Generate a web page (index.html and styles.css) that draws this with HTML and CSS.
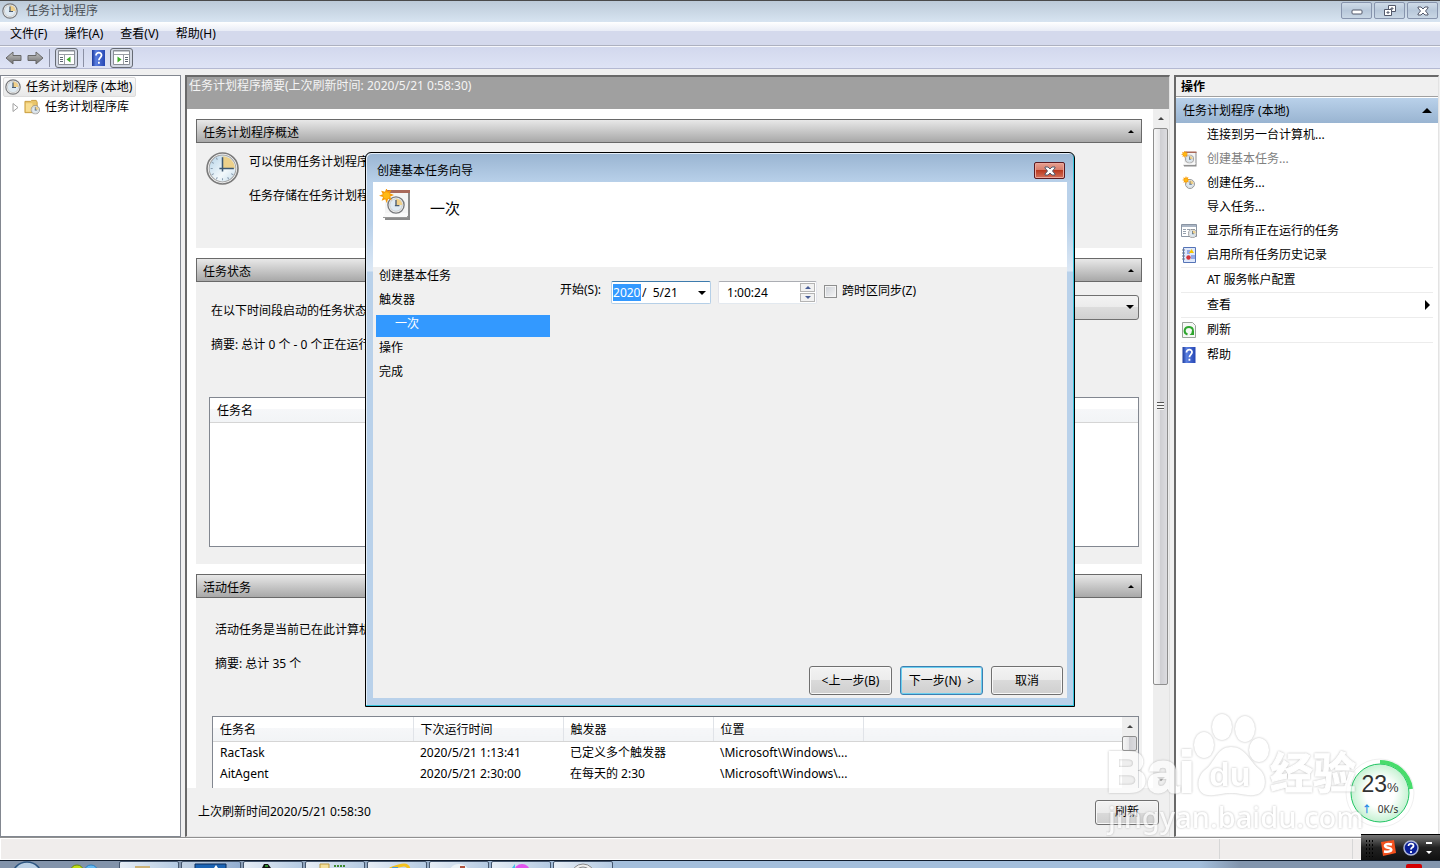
FILE: index.html
```html
<!DOCTYPE html>
<html lang="zh-CN">
<head>
    <meta charset="UTF-8">
    <meta name="viewport" content="width=device-width, initial-scale=1.0">
    <title>任务计划程序</title>
    <link rel="stylesheet" href="styles.css">
</head>
<body>
    <svg class="defs" aria-hidden="true">
        <defs>
            <linearGradient id="face" x1="0" y1="0" x2="1" y2="1">
                <stop offset="0" stop-color="#b4d3e8"/>
                <stop offset="0.6" stop-color="#f2f8fb"/>
                <stop offset="1" stop-color="#c4dcec"/>
            </linearGradient>
            <linearGradient id="metal" x1="0" y1="0" x2="0" y2="1">
                <stop offset="0" stop-color="#c4c4c4"/>
                <stop offset="1" stop-color="#6e6e6e"/>
            </linearGradient>
            <linearGradient id="helpblue" x1="0" y1="0" x2="1" y2="0">
                <stop offset="0" stop-color="#1d3a9c"/>
                <stop offset="0.3" stop-color="#5a7fe0"/>
                <stop offset="1" stop-color="#2546b4"/>
            </linearGradient>
            <symbol id="clock" viewBox="0 0 32 32">
                <circle cx="16" cy="16" r="15" fill="#fdfdfd" stroke="#7b7b7b" stroke-width="1.6"/>
                <circle cx="16" cy="16" r="13" fill="url(#face)" stroke="#a4a4a4"/>
                <path d="M16 16V4a12 12 0 0 1 12 12z" fill="#ecd08a"/>
                <path d="M16 25.500v2M4.500 16h2M10 5.600l1 2M5.600 10l2 1M5.600 22l2-1M10 26.400l1-2M22 26.400l-1-2M26.400 22l-2-1" stroke="#8b9db0"/>
                <path d="M16 5V19M13 16h14" stroke="#3d5872" stroke-width="1.5"/>
            </symbol>
            <symbol id="clock-small" viewBox="0 0 16 16">
                <circle cx="8" cy="8" r="7.200" fill="#f6f6f4" stroke="#77797c" stroke-width="1.2"/>
                <circle cx="8" cy="8" r="5.600" fill="#dfeaf2" stroke="#b9b9b9" stroke-width=".6"/>
                <path d="M8 8V2.500A5.500 5.500 0 0 1 13.500 8z" fill="#f0d089"/>
                <path d="M8 3.500V8.500M7 8.500h4" fill="none" stroke="#4a5c70" stroke-width="1.2"/>
            </symbol>
            <symbol id="star" viewBox="0 0 16 16">
                <path d="M8 0l1.300 3.500L13 2l-1.500 3.700L16 7.500l-4 1.500 1.500 4-3.700-1.500L8.200 16l-1.500-4-3.900 1.500 1.500-3.900L0 8.200l4-1.600L2.300 2.800 6.400 4z" fill="#f79a06"/>
                <circle cx="8" cy="8" r="3.500" fill="#ffb915"/>
            </symbol>
            <symbol id="wizard" viewBox="0 0 32 32">
                <path d="M6 2h25v29H6z" fill="#8b8b8b"/>
                <path d="M6 1h23v26H6z" fill="#f4f4f4"/>
                <path d="M7 1h24v3H7z" fill="#a9695a"/>
                <path d="M6 24l-2 4h24l1-4z" fill="#fafafa"/>
                <path d="M4 28.500h25" stroke="#999"/>
                <use href="#clock-small" x="8" y="7" width="18" height="18"/>
                <use href="#star" x="0" y="-1" width="15" height="15"/>
            </symbol>
            <symbol id="help" viewBox="0 0 13 16">
                <path d="M0 0h13v16H0z" fill="url(#helpblue)"/>
                <path d="M4 5.500C4 1.600 9.800 2 9.500 5.300 9.300 7.500 6.900 7.700 6.900 10.300M6.900 11.700v2" fill="none" stroke="#fff" stroke-width="1.800"/>
            </symbol>
            <symbol id="arrow" viewBox="0 0 17 14">
                <path d="M1 7l7-6v3.500h8v5H8V13z" fill="url(#metal)" stroke="#686868"/>
            </symbol>
            <symbol id="panel" viewBox="0 0 17 15">
                <path d="M.5.500h16v14H.5z" fill="#fff" stroke="#8b8f96"/>
                <path d="M1 1.500h15" stroke="#c4c8ce"/>
                <path d="M1 4.500h15" stroke="#9a9ea5"/>
                <path d="M6.500 5v9" stroke="#9a9ea5"/>
                <path d="M2 7.500h3M2 9.500h3M2 11.500h3" stroke="#5c6672"/>
                <path d="M12.500 6.500v6L8.500 9.500z" fill="#3fae2a"/>
            </symbol>
            <symbol id="folder" viewBox="0 0 17 16">
                <path d="M1 2h6l1-1h5l1 2v11H1z" fill="#e9c56b" stroke="#c99c3e"/>
                <path d="M2 4h7v9H2z" fill="#f8dd92"/>
                <use href="#clock-small" x="7" y="6" width="10" height="10"/>
            </symbol>
            <symbol id="newtask" viewBox="0 0 16 16">
                <use href="#clock-small" x="4" y="4" width="10" height="10"/>
                <use href="#star" x="1" y="1" width="8" height="8"/>
            </symbol>
            <symbol id="running" viewBox="0 0 16 16">
                <path d="M.5 1.500h15v12H.5z" fill="#fff" stroke="#8a95a3"/>
                <path d="M1 2h14v2H1z" fill="#aab5c4"/>
                <path d="M2 6.500h3M6 6.500h3M10 6.500h4M2 8.500h3M2 10.500h3" stroke="#98a2ae"/>
                <use href="#clock-small" x="7" y="6" width="9" height="9"/>
            </symbol>
            <symbol id="history" viewBox="0 0 16 16">
                <path d="M2.500.500h12v15h-12z" fill="#dfe8fb" stroke="#5574b6"/>
                <path d="M1 3h3M1 6h3M1 9h3M1 12h3" stroke="#6f7782"/>
                <path d="M6 4h3M6 6h3M10 9h4M10 11h4" stroke="#496bd0"/>
                <path d="M10.500 2l2.500 4H8z" fill="#f6c600"/>
                <circle cx="7.500" cy="10.500" r="2.200" fill="#d4323a"/>
            </symbol>
            <symbol id="refresh" viewBox="0 0 14 16">
                <path d="M.5.500h10l3 3v12H.5z" fill="#f6f8f6" stroke="#9ba39b"/>
                <path d="M5.500 12.500C1 11 2 5 7 5c4 0 5 4 3 6" fill="none" stroke="#2fa62f" stroke-width="2"/>
                <path d="M12 8.500v4.500H7.500z" fill="#2fa62f"/>
            </symbol>
            <symbol id="cross" viewBox="0 0 12 10">
                <path d="M1 1h3l2 2 2-2h3v1L8.500 5 11 8v1H8L6 7 4 9H1V8l2.500-3L1 2z" fill="#fff" stroke="#53596b"/>
            </symbol>
        </defs>
    </svg>

    <header class="titlebar">
        <svg class="icon16"><use href="#clock-small"/></svg>
        <h1>任务计划程序</h1>
        <div class="window-buttons">
            <button type="button" aria-label="最小化"><svg width="12" height="10"><rect x="1" y="4" width="10" height="4" rx="1" fill="#fff" stroke="#53596b"/></svg></button>
            <button type="button" aria-label="还原"><svg width="12" height="11"><path d="M4.500.500h7v6h-7zM7 3h2v1H7z" fill="#fff" stroke="#53596b"/><path d="M.5 4.500h7v6h-7zM3 7h2v1H3z" fill="#fff" stroke="#53596b"/></svg></button>
            <button type="button" aria-label="关闭"><svg width="12" height="10"><use href="#cross"/></svg></button>
        </div>
    </header>

    <nav class="menubar">
        <a href="#">文件(F)</a>
        <a href="#">操作(A)</a>
        <a href="#">查看(V)</a>
        <a href="#">帮助(H)</a>
    </nav>

    <div class="toolbar">
        <button type="button" aria-label="后退"><svg width="17" height="14"><use href="#arrow"/></svg></button>
        <button type="button" aria-label="前进"><svg class="flip" width="17" height="14"><use href="#arrow"/></svg></button>
        <span class="divider"></span>
        <button type="button" class="pressed" aria-label="显示控制台树"><svg width="17" height="15"><use href="#panel"/></svg></button>
        <span class="divider"></span>
        <button type="button" class="help-button" aria-label="帮助"><svg width="13" height="16"><use href="#help"/></svg></button>
        <button type="button" class="pressed" aria-label="显示操作窗格"><svg class="flip" width="17" height="15"><use href="#panel"/></svg></button>
    </div>

    <main class="workspace">
        <nav class="tree">
            <a href="#" class="tree-root"><svg class="icon16"><use href="#clock-small"/></svg>任务计划程序 (本地)</a>
            <a href="#" class="tree-child"><svg width="7" height="9"><path d="M1 .500l5 4-5 4z" fill="#fff" stroke="#a0a0a0"/></svg><svg class="icon16"><use href="#folder"/></svg>任务计划程序库</a>
        </nav>

        <section class="summary">
            <h2 class="summary-title">任务计划程序摘要(上次刷新时间: 2020/5/21 0:58:30)</h2>
            <div class="summary-view">
                <div class="summary-content">
                    <section class="box overview">
                        <h3>任务计划程序概述<span class="tri up"></span></h3>
                        <div class="box-body">
                            <svg width="33" height="33"><use href="#clock"/></svg>
                            <div>
                                <p>可以使用任务计划程序</p>
                                <p>任务存储在任务计划程</p>
                            </div>
                        </div>
                    </section>
                    <section class="box status">
                        <h3>任务状态<span class="tri up"></span></h3>
                        <div class="box-body">
                            <div class="status-line">
                                <label for="period">在以下时间段启动的任务状态</label>
                                <div class="select-wrap">
                                    <select id="period"><option></option></select>
                                    <span class="tri down"></span>
                                </div>
                            </div>
                            <p>摘要: 总计 0 个 - 0 个正在运行</p>
                            <div class="list">
                                <table>
                                    <thead><tr><th>任务名</th></tr></thead>
                                </table>
                            </div>
                        </div>
                    </section>
                    <section class="box active">
                        <h3>活动任务<span class="tri up"></span></h3>
                        <div class="box-body">
                            <p>活动任务是当前已在此计算机</p>
                            <p>摘要: 总计 35 个</p>
                            <div class="list">
                                <table>
                                    <thead>
                                        <tr><th class="col-name">任务名</th><th class="col">下次运行时间</th><th class="col">触发器</th><th class="col">位置</th><th></th></tr>
                                    </thead>
                                    <tbody>
                                        <tr><td>RacTask</td><td>2020/5/21 1:13:41</td><td>已定义多个触发器</td><td>\Microsoft\Windows\...</td><td></td></tr>
                                        <tr><td>AitAgent</td><td>2020/5/21 2:30:00</td><td>在每天的 2:30</td><td>\Microsoft\Windows\...</td><td></td></tr>
                                    </tbody>
                                </table>
                                <div class="scrollbar small">
                                    <span class="arrow"><i class="tri up"></i></span>
                                    <span class="thumb"></span>
                                </div>
                            </div>
                        </div>
                    </section>
                </div>
                <div class="scrollbar">
                    <span class="arrow"><i class="tri up"></i></span>
                    <span class="thumb"><i class="grip"></i></span>
                    <span class="arrow last"><i class="tri down"></i></span>
                </div>
            </div>
            <footer class="summary-footer">
                <span>上次刷新时间2020/5/21 0:58:30</span>
                <button type="button" class="btn">刷新</button>
            </footer>
        </section>

        <aside class="actions">
            <h2>操作</h2>
            <h3>任务计划程序 (本地)<span class="tri up big"></span></h3>
            <ul>
                <li><a href="#">连接到另一台计算机...</a></li>
                <li><a href="#" class="disabled"><svg class="icon16"><use href="#wizard"/></svg>创建基本任务...</a></li>
                <li><a href="#"><svg class="icon16"><use href="#newtask"/></svg>创建任务...</a></li>
                <li><a href="#">导入任务...</a></li>
                <li><a href="#"><svg class="icon16"><use href="#running"/></svg>显示所有正在运行的任务</a></li>
                <li><a href="#"><svg class="icon16"><use href="#history"/></svg>启用所有任务历史记录</a></li>
                <li class="ruled"><a href="#">AT 服务帐户配置</a></li>
                <li class="ruled"><a href="#">查看<span class="tri right"></span></a></li>
                <li class="ruled"><a href="#"><svg class="icon16"><use href="#refresh"/></svg>刷新</a></li>
                <li class="ruled"><a href="#"><svg class="icon16"><use href="#help"/></svg>帮助</a></li>
            </ul>
        </aside>
    </main>

    <div class="statusbar"><span class="cell"></span><span class="cell"></span><span></span></div>

    <footer class="taskbar">
        <svg class="start" width="120" height="7"><ellipse cx="27" cy="16" rx="15" ry="15" fill="#b9cfe4" stroke="#2d5580" stroke-width="1.500"/><ellipse cx="77" cy="9" rx="6" ry="5" fill="#c4e013" stroke="#6c8a10"/><ellipse cx="91" cy="9" rx="6" ry="5" fill="#62b8f2" stroke="#2b7fc0"/></svg>
        <button type="button" aria-label="文件夹"><svg width="60" height="6"><path d="M15 4h15v2H15z" fill="#cdb277"/></svg></button>
        <button type="button" class="current" aria-label="窗口"><svg width="60" height="6"><path d="M13 2h31v5H13z" fill="#1c64b4" stroke="#0b2c5c"/><path d="M32 6l2-3 2 3z" fill="#fff"/></svg></button>
        <button type="button" aria-label="程序"><svg width="60" height="6"><path d="M18 6l2-4h4l3 4z" fill="#111"/><path d="M21 3h3v2h-3z" fill="#2c8c2c"/></svg></button>
        <button type="button" aria-label="文档"><svg width="60" height="6"><path d="M14 2h9v5h-9z" fill="#f3df9a" stroke="#bd9a40"/><path d="M28 4h12" stroke="#3d8a2e" stroke-width="2" stroke-dasharray="2 1"/></svg></button>
        <button type="button" aria-label="浏览器"><svg width="60" height="6"><path d="M22 7Q32 3 36 3t5 4" fill="none" stroke="#f4c21f" stroke-width="3"/><path d="M24 5h6v2h-6z" fill="#4d9be0"/></svg></button>
        <button type="button" aria-label="应用"><svg width="60" height="6"><circle cx="29" cy="13" r="11" fill="#edf3f7"/><path d="M30 4h5v2h-5z" fill="#b0533f"/></svg></button>
        <button type="button" aria-label="图片"><svg width="60" height="6"><circle cx="30" cy="10" r="8" fill="#e352ee"/><path d="M20 6l3-4v4z" fill="#3fc0e8"/></svg></button>
        <button type="button" aria-label="任务计划程序"><svg width="60" height="6"><circle cx="29" cy="14" r="12" fill="#eee" stroke="#888"/><circle cx="29" cy="14" r="9" fill="#d9e6ee" stroke="#888"/></svg></button>
        <span class="tray"><i class="alert"></i></span>
    </footer>

    <form class="dialog" role="dialog" aria-label="创建基本任务向导">
        <div class="dialog-title">
            <h2>创建基本任务向导</h2>
            <button type="button" class="close" aria-label="关闭"><svg width="12" height="10"><use href="#cross"/></svg></button>
        </div>
        <div class="dialog-inner">
            <div class="dialog-head">
                <svg width="32" height="32"><use href="#wizard"/></svg>
                <h3>一次</h3>
            </div>
            <div class="dialog-body">
                <ol class="steps">
                    <li>创建基本任务</li>
                    <li>触发器</li>
                    <li class="selected">一次</li>
                    <li>操作</li>
                    <li>完成</li>
                </ol>
                <div class="fields">
                    <label for="year">开始(S):</label>
                    <span class="field date">
                        <input type="text" id="year" class="year" value="2020">
                        <input type="text" class="day" value="/  5/21" aria-label="月/日">
                        <button type="button" aria-label="打开日历"><i class="tri down"></i></button>
                    </span>
                    <span class="field time">
                        <input type="text" value="1:00:24" aria-label="时间">
                        <span class="spin">
                            <button type="button" aria-label="增加"><i class="tri up"></i></button>
                            <button type="button" aria-label="减少"><i class="tri down"></i></button>
                        </span>
                    </span>
                    <span class="check">
                        <input type="checkbox" id="sync">
                        <label for="sync">跨时区同步(Z)</label>
                    </span>
                </div>
            </div>
            <div class="dialog-buttons">
                <button type="button" class="btn">&lt;上一步(B)</button>
                <button type="button" class="btn default">下一步(N)&nbsp; &gt;</button>
                <button type="button" class="btn cancel">取消</button>
            </div>
        </div>
    </form>

    <div class="gauge">
        <svg width="70" height="70" aria-hidden="true">
            <defs>
                <radialGradient id="glow">
                    <stop offset="0.5" stop-color="#fff"/>
                    <stop offset="1" stop-color="#c5f2d2"/>
                </radialGradient>
            </defs>
            <circle cx="35" cy="35" r="34" fill="#fff" stroke="#f0f0f0"/>
            <circle cx="35" cy="35" r="29" fill="url(#glow)" stroke="#22c464"/>
            <path d="M35 4a31 31 0 0 1 31 27" fill="none" stroke="#48dc6c" stroke-width="4"/>
        </svg>
        <div class="gauge-text">
            <div class="percent">23<small>%</small></div>
            <div class="speed"><b>↑</b>0K/s</div>
        </div>
    </div>

    <div class="watermark">
        <svg width="262" height="130">
            <g class="mark">
                <text x="0" y="80" class="mark-bai">Bai</text>
                <ellipse cx="98" cy="33" rx="10" ry="13"/>
                <ellipse cx="116" cy="15" rx="10" ry="13"/>
                <ellipse cx="139" cy="17" rx="10" ry="13"/>
                <ellipse cx="153" cy="38" rx="10" ry="12"/>
                <path d="M125 35c-14 0-16 15-25 22-10 7-11 25 2 26 9 1 14-2 23-2s14 3 23 2c13-1 14-19 5-26-9-7-13-22-28-22z"/>
                <text x="103" y="74" class="mark-du">du</text>
                <text x="164" y="77" class="mark-jy">经验</text>
                <text x="2" y="116" class="mark-url">jingyan.baidu.com</text>
            </g>
        </svg>
    </div>

    <div class="ime">
        <span class="dots"></span>
        <svg width="16" height="16"><path d="M1 2l13-2 2 13-13 3z" fill="#f4511e"/><path d="M12 4.500C4 2.500 3 7 8 7.700s5 5-4 3.800" fill="none" stroke="#fff" stroke-width="2.500"/></svg>
        <svg width="16" height="16"><circle cx="8" cy="8" r="7" fill="#0a1e96" stroke="#aeb6d8" stroke-width="1.500"/><path d="M5.500 6c0-3.500 5.500-3 5 0-.3 1.800-2.500 1.500-2.500 3.500M8 11v2" fill="none" stroke="#fff" stroke-width="1.800"/></svg>
        <svg width="6" height="12"><path d="M0 0h6v2H0zM0 9h6l-3 3z" fill="#fff"/></svg>
    </div>
</body>
</html>
```

FILE: styles.css
```css
* {
    box-sizing: border-box;
}
body {
    margin: 0;
    height: 100vh;
    display: flex;
    flex-direction: column;
    position: relative;
    overflow: hidden;
    background-color: #f0f0f0;
    color: #000;
    font-family: "Noto Sans", "Noto Sans CJK SC", sans-serif;
    font-size: 12px;
    line-height: 20px;
}
h1, h2, h3, p, ul, ol {
    margin: 0;
    padding: 0;
    font-size: 12px;
    font-weight: normal;
}
ul, ol {
    list-style: none;
}
a {
    color: inherit;
    text-decoration: none;
}
button, input, select {
    font: inherit;
    color: inherit;
    margin: 0;
    padding: 0;
    border: none;
    background: none;
}
svg {
    display: block;
    flex: none;
}
.defs {
    position: absolute;
    width: 0;
    height: 0;
}
.icon16 {
    width: 16px;
    height: 16px;
}
.flip {
    transform: scaleX(-1);
}

/* small triangles used on headers, scrollbars and drop-downs */
.tri {
    display: block;
    width: 0;
    height: 0;
    border: 3px solid transparent;
}
.tri.up {
    border-top: none;
    border-bottom-color: #000;
}
.tri.down {
    border-width: 4px 4px 0;
    border-top-color: #000;
}
.tri.right {
    border-width: 5px 0 5px 5px;
    border-left-color: #000;
}
.tri.big {
    border-width: 0 5px 5px;
}

/* title, menu and tool bars */
.titlebar {
    flex: none;
    height: 22px;
    display: flex;
    align-items: center;
    gap: 8px;
    padding: 0 2px 2px;
    border-top: 1px solid #4a4a4a;
    background: linear-gradient(#bccad8, #d7e4f1);
}
.titlebar h1 {
    flex: 1;
    color: #4a4f55;
}
.window-buttons {
    display: flex;
    gap: 2px;
}
.window-buttons button {
    width: 31px;
    height: 17px;
    display: flex;
    align-items: center;
    justify-content: center;
    border: 1px solid #8794ad;
    border-radius: 2px;
    background: linear-gradient(#cfdbe8, #b8c8da 50%, #c9d7e5);
}
.menubar {
    flex: none;
    height: 24px;
    display: flex;
    align-items: center;
    gap: 17px;
    padding: 0 10px;
    border-bottom: 1px solid #adb1bf;
    background: linear-gradient(#fff, #e8ecf6 9px, #d4d9ec 9px);
}
.toolbar {
    flex: none;
    height: 23px;
    display: flex;
    align-items: center;
    gap: 5px;
    padding-left: 5px;
    border-top: 1px solid #f6f7fb;
    border-bottom: 1px solid #b4b9d2;
    background: linear-gradient(#d2d8ed, #dee3f5);
}
.toolbar button {
    display: flex;
    align-items: center;
    justify-content: center;
}
.toolbar .pressed {
    width: 23px;
    height: 20px;
    border: 1px solid #666b74;
    border-radius: 3px;
    background-color: #d3d8e4;
}
.toolbar .help-button {
    padding: 0 0 0 3px;
}
.divider {
    width: 1px;
    height: 18px;
    background-color: #8b90a4;
}

/* three panes */
.workspace {
    flex: 1;
    min-height: 0;
    display: grid;
    grid-template-columns: 181px minmax(0, 1fr) 265px;
    gap: 4px;
    padding: 6px 1px 0 0;
    border-bottom: 1px solid #909090;
}
.tree {
    border: 1px solid #828790;
    background-color: #fff;
    padding: 1px 2px;
}
.tree a {
    display: flex;
    align-items: center;
    gap: 5px;
}
.tree-root {
    width: max-content;
    padding: 0 3px 0 1px;
    border: 1px solid #dcdcdc;
    border-radius: 2px;
    background: linear-gradient(#fafafa, #e8e8e8);
    line-height: 18px;
}
.tree .tree-child {
    padding-left: 9px;
}
.summary {
    display: flex;
    flex-direction: column;
    min-height: 0;
    border: solid #696969;
    border-width: 2px 1px 1px 2px;
    border-right-color: #e3e3e3;
    border-bottom-color: #e3e3e3;
}
.summary-title {
    flex: none;
    height: 32px;
    padding-left: 2px;
    background-color: #a0a0a0;
    color: #f4f4f4;
    line-height: 18px;
}
.summary-view {
    flex: 1;
    min-height: 0;
    display: flex;
    background-color: #fff;
    overflow: hidden;
}
.summary-content {
    flex: 1;
    display: flex;
    flex-direction: column;
    gap: 10px;
    padding: 10px 11px 0 9px;
    overflow: hidden;
}
.box {
    flex: none;
    background-color: #f0f0f0;
}
.box h3 {
    height: 24px;
    display: flex;
    align-items: center;
    justify-content: space-between;
    padding: 0 7px 0 6px;
    border: 1px solid #696969;
    background: linear-gradient(#e8e8e8, #a8a8a8);
    line-height: 26px;
    align-items: baseline;
}
.box h3 .tri {
    align-self: center;
}
.box p {
    height: 34px;
}
.overview .box-body {
    display: flex;
    gap: 10px;
    padding: 9px 10px;
    height: 105px;
}
.status .box-body {
    padding: 12px 3px 17px 13px;
}
.status p, .status label {
    padding-left: 2px;
}
.status label {
    padding-top: 4px;
}
.status-line {
    display: flex;
    align-items: center;
    justify-content: space-between;
    height: 30px;
    margin-bottom: 11px;
}
.select-wrap {
    display: flex;
    align-items: center;
    justify-content: flex-end;
    width: 190px;
    height: 25px;
    padding-right: 4px;
    margin-bottom: 4px;
    border: 1px solid #707070;
    border-radius: 3px;
    background: linear-gradient(#f3f3f3, #ebebeb 50%, #dcdcdc 50%, #d0d0d0);
}
.select-wrap select {
    flex: 1;
    appearance: none;
}
.list {
    display: flex;
    border: 1px solid #828790;
    background-color: #fff;
}
.status .list {
    height: 150px;
    margin-top: 28px;
}
.active .box-body {
    padding: 22px 3px 0 16px;
}
.active p {
    padding-left: 3px;
}
.active .list {
    height: 180px;
    margin-top: 28px;
}
table {
    flex: 1;
    align-self: flex-start;
    table-layout: fixed;
    border-collapse: collapse;
    width: 100%;
}
th, td {
    height: 21px;
    padding: 0 0 0 7px;
    line-height: 21px;
    font-weight: normal;
    text-align: left;
    white-space: nowrap;
}
th {
    height: 24px;
    padding-top: 2px;
    border-bottom: 1px solid #d5d5d5;
    background: linear-gradient(#fff 45%, #f6f7f9 45%, #f2f4f6);
}
th.col, th.col-name {
    border-right: 1px solid #e0e3e8;
}
.col-name {
    width: 200px;
}
.col {
    width: 150px;
}
.scrollbar {
    flex: none;
    width: 16px;
    display: flex;
    flex-direction: column;
    padding-right: 1px;
    background-color: #eeeeee;
}
.scrollbar .arrow {
    flex: none;
    height: 19px;
    display: flex;
    align-items: center;
    justify-content: center;
}
.scrollbar .last {
    margin-top: auto;
}
.scrollbar .arrow .tri {
    border-bottom-color: #444;
}
.scrollbar .arrow .tri.down {
    border-bottom-color: transparent;
    border-top-color: #777;
}
.thumb {
    height: 82%;
    display: flex;
    align-items: center;
    justify-content: center;
    border: 1px solid #8e8e8e;
    border-radius: 2px;
    background: linear-gradient(90deg, #f6f6f6, #e6e6e8 45%, #cfcfd3 50%, #dcdce0);
}
.small .thumb {
    height: 15px;
}
.grip {
    width: 7px;
    height: 8px;
    background: repeating-linear-gradient(#555 0 1px, #f5f5f5 1px 3px);
}
.summary-footer {
    flex: none;
    height: 48px;
    display: flex;
    align-items: center;
    justify-content: space-between;
    padding: 0 10px 0 11px;
}
.btn {
    height: 29px;
    min-width: 83px;
    border: 1px solid #707070;
    border-radius: 3px;
    box-shadow: inset 0 0 0 1px #f8f8f8;
    background: linear-gradient(#f3f3f3, #ebebeb 50%, #dadada 50%, #cfcfcf);
}
.summary-footer .btn {
    min-width: 64px;
    height: 25px;
}
.actions {
    border: 2px solid #696969;
    border-right: 1px solid #e3e3e3;
    border-bottom: 1px solid #e3e3e3;
    background-color: #fff;
}
.actions h2 {
    height: 20px;
    padding-left: 5px;
    border-bottom: 1px solid #a0a0a0;
    background-color: #f0f0f0;
    font-weight: bold;
}
.actions h3 {
    height: 26px;
    display: flex;
    align-items: center;
    justify-content: space-between;
    padding: 0 6px 0 7px;
    border-top: 1px solid #fff;
    background: linear-gradient(#b9d1ea, #99b4d1);
}
.actions li {
    margin: 0 5px;
}
.actions .ruled {
    border-top: 1px solid #ececec;
}
.actions a {
    display: flex;
    align-items: center;
    height: 24px;
    padding-left: 26px;
}
.actions .icon16 {
    margin: 0 10px 0 -26px;
}
.actions .disabled {
    color: #808080;
}
.actions .tri.right {
    margin: 0 3px 0 auto;
}

.statusbar {
    flex: none;
    height: 22px;
    display: grid;
    grid-template-columns: 1fr 133px 86px;
    border: 1px solid #fff;
    background-color: #f0edec;
}
.cell {
    border-right: 1px solid #d7d7d7;
}
.taskbar {
    flex: none;
    height: 8px;
    display: flex;
    gap: 2px;
    overflow: hidden;
    border-top: 1px solid #0f1b2b;
    background: linear-gradient(90deg, #8293aa 120px, #a3bedb 600px, #a3bedb 1200px, #8295ad 1240px);
}
.taskbar .start {
    margin-right: -3px;
}
.taskbar button {
    flex: none;
    width: 60px;
    height: 14px;
    border: 1px solid #44566e;
    border-radius: 2px;
    background: linear-gradient(90deg, #e6edf5, #b4cae2);
    overflow: hidden;
    display: flex;
}
.taskbar .current {
    background: linear-gradient(90deg, #c2d2e4, #92add0);
}
.tray {
    flex: 1;
    display: flex;
    justify-content: flex-end;
    padding: 3px 18px 0 0;
}
.alert {
    width: 16px;
    height: 8px;
    border-radius: 2px;
    background-color: #d30000;
}

/* wizard window */
.dialog {
    position: absolute;
    top: 152px;
    left: 0;
    right: 0;
    width: 710px;
    margin: 0 auto;
    padding: 0 6px 8px;
    border: 1px solid #000;
    border-radius: 6px 6px 0 0;
    box-shadow: inset -1px -1px #35c4dc, inset 1px 1px #e4eef8;
    background: linear-gradient(#99b4d1, #b9d1ea 30px, #b9d1ea 70px, #dce8f5 118px, #b9d1ea 119px);
}
.dialog-title {
    height: 29px;
    display: flex;
    align-items: center;
    justify-content: space-between;
    padding: 6px 3px 0 5px;
}
.close {
    width: 31px;
    height: 17px;
    display: flex;
    align-items: center;
    justify-content: center;
    border: 1px solid #5b1a20;
    border-radius: 2px;
    box-shadow: inset 0 0 0 1px #eba79c;
    background: linear-gradient(#e8a090, #d77a68 50%, #b93a20 50%, #d4705a);
}
.dialog-inner {
    margin: 0 1px;
    background-color: #f0f0f0;
}
.dialog-head {
    height: 85px;
    display: flex;
    align-items: flex-start;
    gap: 19px;
    padding: 7px 6px;
    background-color: #fff;
}
.dialog-head h3 {
    padding-top: 9px;
    font-size: 15px;
}
.dialog-body {
    height: 399px;
    display: flex;
    gap: 10px;
    padding: 0 3px;
}
.steps {
    width: 174px;
}
.steps li {
    height: 24px;
    padding: 0 3px;
    line-height: 18px;
}
.steps .selected {
    height: 22px;
    margin-bottom: 2px;
    padding-left: 19px;
    background-color: #3399ff;
    color: #fff;
}
.fields {
    display: flex;
    gap: 7px;
    height: 24px;
    margin-top: 14px;
    line-height: 18px;
}
.fields > label {
    margin-right: 3px;
}
.field {
    display: flex;
    align-items: center;
    height: 23px;
    border: 1px solid #b5cfe7;
    border-top-color: #3d7bad;
    border-radius: 2px;
    background-color: #fff;
}
.date {
    width: 100px;
    padding-left: 1px;
}
.year {
    width: 28px;
    height: 17px;
    background-color: #3399ff;
    color: #fff;
}
.day {
    width: 57px;
    padding-left: 1px;
    white-space: pre;
}
.time {
    width: 99px;
    border-color: #abadb3 #e2e3ea #e3e9ef;
    padding-left: 8px;
}
.time input {
    width: 73px;
}
.spin {
    display: flex;
    flex-direction: column;
    gap: 1px;
}
.spin button {
    width: 15px;
    height: 9px;
    display: flex;
    align-items: center;
    justify-content: center;
    border: 1px solid #b4b4b4;
    background-color: #f2f2f2;
}
.spin .tri.up {
    border-bottom-color: #4a5f97;
}
.spin .tri.down {
    border-width: 3px 3px 0;
    border-top-color: #4a5f97;
}
.check {
    display: flex;
    align-items: center;
    gap: 5px;
    height: 20px;
}
#sync {
    appearance: none;
    width: 13px;
    height: 13px;
    border: 1px solid #8e8f8f;
    box-shadow: inset 0 0 0 1px #f4f4f4;
    background: linear-gradient(135deg, #cbcfd5, #f6f6f6);
}
.dialog-buttons {
    display: flex;
    justify-content: flex-end;
    gap: 8px;
    padding: 0 4px 3px;
}
.dialog-buttons .default {
    border-color: #3c7fb1;
    box-shadow: inset 0 0 0 1px #6cd0f0;
}
.dialog-buttons .cancel {
    min-width: 72px;
}

/* floating overlays */
.watermark {
    position: absolute;
    right: 72px;
    bottom: 26px;
    opacity: 0.7;
    pointer-events: none;
}
.mark {
    fill: #fff;
    font-family: "Liberation Sans", "Noto Sans CJK SC", sans-serif;
    font-weight: bold;
}
.mark > * {
    filter: drop-shadow(0 0 1px #a0a0a0);
}
.mark-bai {
    font-size: 57px;
    stroke: #fff;
    stroke-width: 2px;
}
.mark-du {
    font-size: 34px;
}
.mark-jy {
    font-size: 43px;
    stroke: #fff;
    stroke-width: 1px;
}
.mark-url {
    font-size: 29px;
    font-family: "Noto Sans", sans-serif;
    font-weight: 500;
}
.gauge {
    position: absolute;
    right: 25px;
    bottom: 40px;
}
.gauge-text {
    position: absolute;
    inset: 12px 0 0;
    text-align: center;
    color: #333;
}
.percent {
    font-family: "Liberation Sans", sans-serif;
    font-size: 23px;
    line-height: 28px;
}
.percent small {
    font-size: 13px;
}
.speed {
    font-size: 10px;
    line-height: 14px;
}
.speed b {
    margin-right: 6px;
    color: #1e88e5;
}
.ime {
    position: absolute;
    right: 0;
    bottom: 8px;
    width: 79px;
    height: 26px;
    display: flex;
    align-items: center;
    gap: 7px;
    padding-left: 4px;
    background: linear-gradient(#777, #222 50%, #111);
    border-top: 1px solid #000;
}
.dots {
    width: 8px;
    height: 18px;
    background: radial-gradient(circle, #000 1px, transparent 1px) 0 0 / 3px 4px;
}
```
